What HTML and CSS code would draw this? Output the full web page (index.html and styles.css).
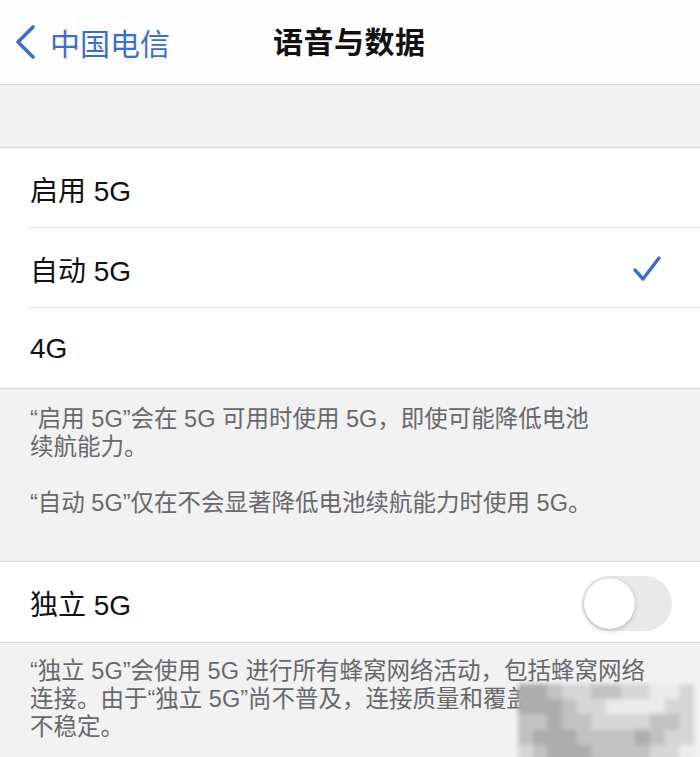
FILE: index.html
```html
<!DOCTYPE html>
<html lang="zh-CN">

<head>
	<meta charset="UTF-8"/>
	<meta name="viewport" content="width=device-width, initial-scale=1.0"/>
	<title>语音与数据</title>
	<link rel="stylesheet" href="styles.css">
</head>

<body>
<div class="page">
	<div class="nav">
		<a class="back" href="#">
			<svg class="chevron" width="24" height="36" viewBox="0 0 24 36">
				<path d="M19 3 L4 18 L19 33" fill="none" stroke="#3b6fc9" stroke-width="3.6" stroke-linecap="round" stroke-linejoin="round"/>
			</svg>
			<span>中国电信</span>
		</a>
		<h1 class="title">语音与数据</h1>
	</div>

	<div class="gap"></div>

	<ul class="group">
		<li class="row"><span>启用 5G</span></li>
		<li class="row">
			<span>自动 5G</span>
			<svg class="check" width="30" height="28" viewBox="0 0 30 28">
				<path d="M3 15 L11 24 L27 3" fill="none" stroke="#3b6fc9" stroke-width="3.4" stroke-linecap="round" stroke-linejoin="round"/>
			</svg>
		</li>
		<li class="row"><span>4G</span></li>
	</ul>

	<div class="note note-first">
		<p>“启用 5G”会在 5G 可用时使用 5G，即使可能降低电池<br>续航能力。</p>
		<p>“自动 5G”仅在不会显著降低电池续航能力时使用 5G。</p>
	</div>

	<ul class="group">
		<li class="row">
			<span>独立 5G</span>
			<div class="switch"><div class="knob"></div></div>
		</li>
	</ul>

	<div class="note note-last">
		<p>“独立 5G”会使用 5G 进行所有蜂窝网络活动，包括蜂窝网络<br>连接。由于“独立 5G”尚不普及，连接质量和覆盖范围可能<br>不稳定。</p>
	</div>

	<!-- 打码区域 -->
	<div class="mosaic">
		<i class="s4"></i><i class="s4"></i><i class="s3"></i><i class="s2"></i><i class="s2"></i><i class="s3"></i><i class="s3"></i><i class="s2"></i><i class="s2"></i><i class="s1"></i><i class="s1"></i><i class="s2"></i>
		<i class="s4"></i><i class="s4"></i><i class="s4"></i><i class="s3"></i><i class="s2"></i><i class="s2"></i><i class="s1"></i><i class="s1"></i><i class="s1"></i><i class="s1"></i><i class="s2"></i><i class="s2"></i>
		<i class="s3"></i><i class="s3"></i><i class="s4"></i><i class="s3"></i><i class="s3"></i><i class="s2"></i><i class="s2"></i><i class="s2"></i><i class="s2"></i><i class="s3"></i><i class="s3"></i><i class="s2"></i>
		<i class="s3"></i><i class="s4"></i><i class="s4"></i><i class="s4"></i><i class="s3"></i><i class="s3"></i><i class="s3"></i><i class="s3"></i><i class="s4"></i><i class="s3"></i><i class="s2"></i><i class="s2"></i>
		<i class="s2"></i><i class="s3"></i><i class="s4"></i><i class="s4"></i><i class="s4"></i><i class="s3"></i><i class="s3"></i><i class="s3"></i><i class="s3"></i><i class="s2"></i><i class="s2"></i><i class="s1"></i>
	</div>
</div>
</body>

</html>
```

FILE: styles.css
```css
* {
	box-sizing: border-box;
}

body {
	margin: 0;
	background: #f2f2f2;
	font-family: "Liberation Sans", "Noto Sans CJK SC", sans-serif;
	color: #111;
}

.page {
	position: relative;
	width: 700px;
	height: 757px;
	overflow: hidden;
}

.nav {
	height: 85px;
	background: #fdfdfd;
	border-bottom: 1px solid #d9d9d9;
	display: flex;
	align-items: center;
	position: relative;
}

.back {
	display: flex;
	align-items: center;
	gap: 12px;
	padding-left: 14px;
	color: #3b6fc9;
	text-decoration: none;
	font-size: 30px;
}

.title {
	position: absolute;
	left: 273px;
	top: 0;
	margin: 0;
	line-height: 85px;
	font-size: 30px;
	font-weight: 700;
	letter-spacing: 0.5px;
}

.gap {
	height: 62px;
}

.group {
	margin: 0;
	padding: 0 0 0 28px;
	list-style: none;
	background: #fff;
	border-top: 1px solid #d9d9d9;
	border-bottom: 1px solid #d9d9d9;
}

.row {
	height: 80px;
	display: flex;
	align-items: center;
	justify-content: space-between;
	padding: 2px 30px 0 2px;
	font-size: 28px;
	border-bottom: 1px solid #e2e2e2;
}

.row:last-child {
	border-bottom: none;
}

.check {
	margin-right: 8px;
}

.switch {
	width: 90px;
	height: 55px;
	border-radius: 28px;
	background: #e9e9ea;
	padding: 2px;
	margin-right: -2px;
}

.knob {
	width: 51px;
	height: 51px;
	border-radius: 50%;
	background: #fff;
	box-shadow: 0 2px 5px rgba(0, 0, 0, 0.18), 0 0 1px rgba(0, 0, 0, 0.2);
}

.note {
	padding: 16px 30px 44px;
	color: #68686c;
	font-size: 23.5px;
	line-height: 28px;
}

.note p {
	margin: 0 0 28px;
}

.note p:last-child {
	margin-bottom: 0;
}

.note-last {
	padding-top: 14px;
}

.mosaic {
	position: absolute;
	left: 518px;
	top: 684px;
	width: 176px;
	height: 76px;
	display: grid;
	grid-template-columns: repeat(12, 1fr);
	grid-template-rows: repeat(5, 1fr);
	filter: blur(2px);
}

.mosaic .s1 { background: #ebebeb; }
.mosaic .s2 { background: #d6d6d6; }
.mosaic .s3 { background: #c2c2c2; }
.mosaic .s4 { background: #adadad; }
```
